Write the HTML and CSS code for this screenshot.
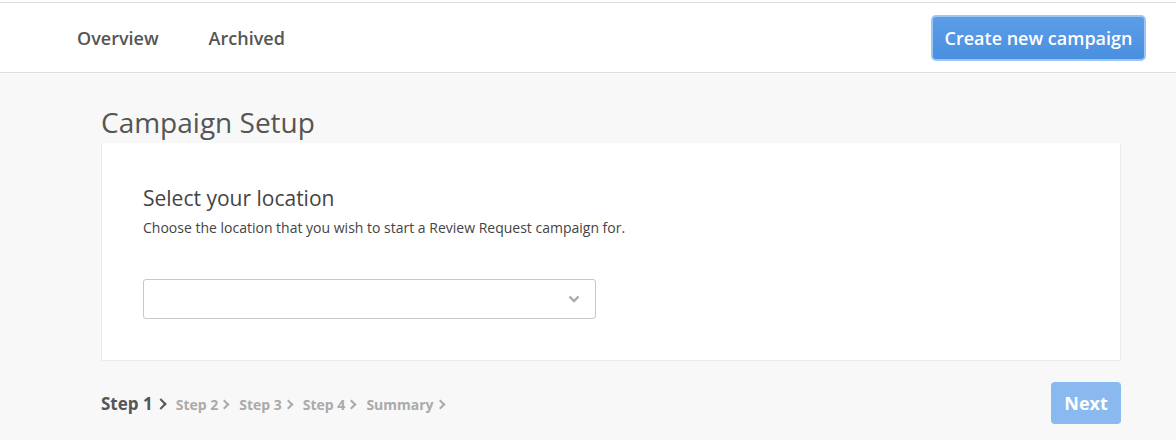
FILE: index.html
```html
<!DOCTYPE html>
<html lang="en">
<head>
    <meta charset="UTF-8">
    <title>Campaign Setup</title>
    <link rel="stylesheet" href="styles.css">
</head>
<body>
    <div class="topbar">
        <nav class="tabs">
            <a href="#">Overview</a>
            <a href="#">Archived</a>
        </nav>
        <button class="btn-create">Create new campaign</button>
    </div>

    <div class="page">
        <h1>Campaign Setup</h1>
        <div class="card">
            <h2>Select your location</h2>
            <p>Choose the location that you wish to start a Review Request campaign for.</p>
            <div class="select">
                <svg width="12" height="8" viewBox="0 0 12 8"><path d="M1.5 1.5 L6 6 L10.5 1.5" fill="none" stroke="#aaa" stroke-width="2.4"/></svg>
            </div>
        </div>

        <div class="footer">
            <div class="steps">
                <span class="step current">Step 1</span>
                <span class="step">Step 2</span>
                <span class="step">Step 3</span>
                <span class="step">Step 4</span>
                <span class="step">Summary</span>
            </div>
            <button class="btn-next">Next</button>
        </div>
    </div>
</body>
</html>
```

FILE: styles.css
```css
body {
    margin: 0;
    font-family: "Open Sans", Arial, sans-serif;
    background: #f8f8f8;
    color: #555;
    border-top: 2px solid #fff;
}

.topbar {
    display: flex;
    align-items: center;
    justify-content: space-between;
    height: 69px;
    background: #fff;
    border-top: 1px solid #ddd;
    border-bottom: 1px solid #ddd;
    padding: 0 30px 0 77px;
}

.tabs {
    display: flex;
    gap: 50px;
}

.tabs a {
    text-decoration: none;
    color: #555;
    font-size: 18px;
    font-weight: 600;
}

.btn-create {
    font-family: inherit;
    font-size: 18px;
    font-weight: 600;
    color: #fff;
    background: linear-gradient(#5d9de8, #4a8fe0);
    border: 2px solid #9cc6f4;
    border-radius: 5px;
    width: 215px;
    height: 46px;
    margin-top: 0;
}

.page {
    padding: 0 55px 0 101px;
}

h1 {
    margin: 30px 0 2px;
    font-size: 28px;
    font-weight: 400;
    color: #555;
    line-height: 38px;
}

.card {
    background: #fff;
    border: 1px solid #ebebeb;
    border-top: none;
    border-radius: 2px;
    padding: 41px 41px 41px;
}

h2 {
    margin: 0;
    font-size: 21px;
    font-weight: 400;
    color: #444;
    line-height: 28px;
}

.card p {
    margin: 6px 0 0;
    font-size: 14px;
    color: #444;
    line-height: 20px;
}

.select {
    margin-top: 41px;
    height: 38px;
    border: 1px solid #c8c8c8;
    border-radius: 3px;
    display: flex;
    align-items: center;
    justify-content: flex-end;
    padding-right: 15px;
    width: 436px;
}

.footer {
    display: flex;
    align-items: center;
    justify-content: space-between;
    margin-top: 21px;
}

.steps {
    display: flex;
    align-items: baseline;
    gap: 11px;
}

.step {
    font-size: 14px;
    font-weight: 700;
    color: #aaa;
}

.step::after {
    content: "";
    display: inline-block;
    width: 5px;
    height: 5px;
    border-top: 2px solid currentColor;
    border-right: 2px solid currentColor;
    transform: rotate(45deg);
    margin-left: 3px;
    position: relative;
    top: -2px;
}

.step.current {
    font-size: 17px;
    color: #555;
}

.step.current::after {
    width: 6px;
    height: 6px;
    margin-left: 4px;
}

.btn-next {
    font-family: inherit;
    font-size: 18px;
    font-weight: 700;
    color: #fff;
    background: #8ab9ef;
    border: none;
    border-radius: 4px;
    width: 70px;
    height: 42px;
}
```
